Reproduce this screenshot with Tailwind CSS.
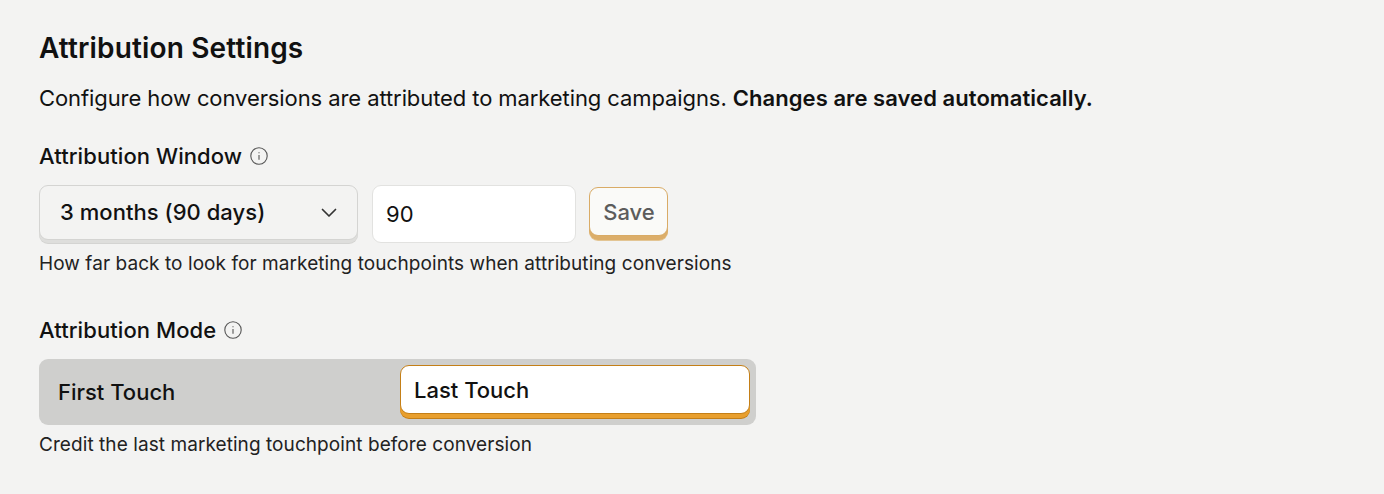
<!DOCTYPE html>
<html lang="en">
<head>
  <meta charset="UTF-8">
  <title>Attribution Settings</title>
  <script src="https://cdn.jsdelivr.net/npm/@tailwindcss/browser@4"></script>
</head>
<body class="bg-[#f3f3f2] h-[494px] overflow-hidden font-['Inter',sans-serif] text-[#111111]">
  <div class="pl-[39px] pt-[31px]">
    <h2 class="text-[28px] leading-[34px] font-semibold tracking-[0.15px]">Attribution Settings</h2>
    <p class="mt-[21px] text-[22px] leading-[24px] tracking-[-0.09px]">Configure how conversions are attributed to marketing campaigns. <b class="font-semibold tracking-[0.06px]">Changes are saved automatically.</b></p>

    <!-- window -->
    <div class="mt-[32px] flex items-center gap-[8px] h-[28px]">
      <span class="text-[22px] font-[450] tracking-[0.08px]">Attribution Window</span>
      <svg class="w-[18px] h-[18px] text-[#555555]" viewBox="0 0 18 18" fill="none" stroke="currentColor" stroke-width="1.1"><circle cx="9" cy="9" r="8.2"/><path d="M9 8v4.8M9 5.2v1.1"/></svg>
    </div>
    <div class="mt-[15px] flex items-center">
      <div class="w-[319px] h-[55px] mb-[3px] rounded-[9px] border border-[#d4d4d2] bg-[#f3f3f2] shadow-[0_3px_0_#dededc,0_4px_0_#d4d4d2] flex items-center justify-between pl-[20px] pr-[19px]">
        <span class="text-[22px] font-[450] tracking-[0.04px]">3 months (90 days)</span>
        <svg class="w-[18px] h-[18px] text-[#333333]" viewBox="0 0 18 18" fill="none" stroke="currentColor" stroke-width="1.7" stroke-linecap="round" stroke-linejoin="round"><path d="M2.5 5.5 9 12l6.5-6.5"/></svg>
      </div>
      <div class="ml-[14px] w-[204px] h-[58px] rounded-[9px] border border-[#e2e2e0] bg-white flex items-center pl-[13px] text-[22px]">90</div>
      <button class="ml-[13px] w-[79px] h-[49px] mb-[5px] pt-[1px] pl-[1px] rounded-[9px] border border-[#d9ab66] bg-[#fafaf8] shadow-[0_4px_0_#dcae6a,0_5px_0_#e3c594] text-[22px] font-[450] text-[#5c5c5c]">Save</button>
    </div>
    <p class="mt-[9px] text-[19px] leading-[24px] tracking-[0.07px] text-[#222222]">How far back to look for marketing touchpoints when attributing conversions</p>

    <!-- mode -->
    <div class="mt-[40px] flex items-center gap-[8px] h-[28px]">
      <span class="text-[22px] font-[450] tracking-[0.08px]">Attribution Mode</span>
      <svg class="w-[18px] h-[18px] text-[#555555]" viewBox="0 0 18 18" fill="none" stroke="currentColor" stroke-width="1.1"><circle cx="9" cy="9" r="8.2"/><path d="M9 8v4.8M9 5.2v1.1"/></svg>
    </div>
    <div class="mt-[15px] w-[717px] h-[66px] rounded-[9px] bg-[#cfcfcd] flex pt-[6px] pl-[19px] pr-[6px]">
      <div class="w-[342px] h-[54px] flex items-center text-[22px] font-[450]">First Touch</div>
      <div class="w-[350px] h-[49px] pt-[1px] rounded-[9px] border border-[#c47f17] bg-white shadow-[0_4px_0_#e89f2e,0_5px_0_#c47f17] flex items-center pl-[13px] text-[22px] font-[450]">Last Touch</div>
    </div>
    <p class="mt-[8px] text-[19px] leading-[24px] tracking-[0.07px] text-[#222222]">Credit the last marketing touchpoint before conversion</p>
  </div>
</body>
</html>
